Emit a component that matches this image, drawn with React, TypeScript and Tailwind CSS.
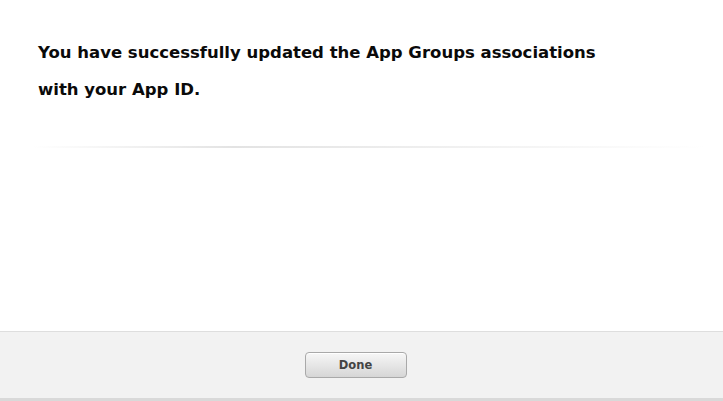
export default function App() {
  return (
    <div className="flex h-[401px] w-[723px] flex-col bg-white" style={{ fontFamily: '"DejaVu Sans", sans-serif' }}>
      <div className="flex-1 px-[38px] pt-[34px]">
        <h1 className="text-[16.5px] font-bold leading-[37px] text-[#0a0a0a]">
          You have successfully updated the App Groups associations
          <br />
          with your App ID.
        </h1>
        <div className="mt-[38px] mr-[-20px] ml-[-6px] h-[2px] bg-gradient-to-r from-transparent via-[#e3e3e3] via-30% to-transparent" />
      </div>
      <div className="flex h-[67px] items-center justify-center border-t border-[#dedede] bg-[#f2f2f2] pr-[12px]">
        <button className="h-[26px] w-[102px] rounded-[4px] border border-[#a9a9a9] bg-gradient-to-b from-[#f7f7f7] to-[#d6d6d6] pt-[2px] text-[11.5px] font-bold text-[#444] shadow-[0_1px_0_#fff_inset]">
          Done
        </button>
      </div>
      <div className="h-[3px] bg-[#d9d9d9]" />
    </div>
  );
}
